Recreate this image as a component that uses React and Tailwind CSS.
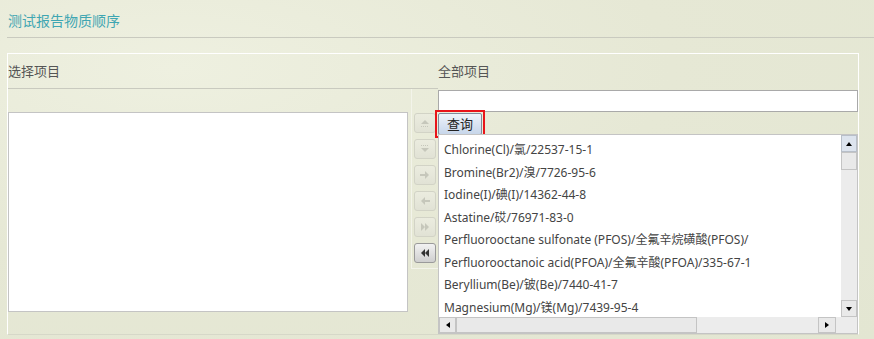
import React from 'react';

const items = [
  'Chlorine(Cl)/氯/22537-15-1',
  'Bromine(Br2)/溴/7726-95-6',
  'Iodine(I)/碘(I)/14362-44-8',
  'Astatine/砹/76971-83-0',
  'Perfluorooctane sulfonate (PFOS)/全氟辛烷磺酸(PFOS)/',
  'Perfluorooctanoic acid(PFOA)/全氟辛酸(PFOA)/335-67-1',
  'Beryllium(Be)/铍(Be)/7440-41-7',
  'Magnesium(Mg)/镁(Mg)/7439-95-4',
];

const cjk = "font-['Noto_Sans_CJK_SC',sans-serif]";
const latin = "font-['Noto_Sans','Noto_Sans_CJK_SC',sans-serif]";

function Tri({ dir, color = '#000' }) {
  const pts = {
    up: '1,6 4,2 7,6',
    down: '1,2 4,6 7,2',
    left: '6,1 2,4 6,7',
    right: '2,1 6,4 2,7',
  }[dir];
  return (
    <svg width="8" height="8" viewBox="0 0 8 8">
      <polygon points={pts} fill={color} />
    </svg>
  );
}

function MoveButton({ icon, enabled }) {
  return (
    <div
      className={
        'w-[22px] h-[20px] rounded-[3px] border flex items-center justify-center ' +
        (enabled
          ? 'border-[#9a9a9a] bg-gradient-to-b from-[#f2f2f2] to-[#cfcfcf]'
          : 'border-[#d2d3c6] bg-gradient-to-b from-[#ebecdf] to-[#e1e2d5]')
      }
    >
      {icon}
    </div>
  );
}

const dis = '#c6c7bb';

export default function App() {
  return (
    <div className="w-[874px] h-[339px] overflow-hidden bg-[#e7e9d7] bg-[radial-gradient(ellipse_at_20%_20%,#eef0e0_0%,#e6e8d5_50%,#e3e6d2_100%)]">
      <div className={`${cjk} pl-2 pt-[10px] h-[37px] text-[14px] text-[#3fa6b2] leading-[20px]`}>
        测试报告物质顺序
      </div>
      <div className="ml-[7px] border-t border-[#c9cabf]" />

      <div className="mt-[15px] ml-[7px] w-[852px] h-[282px] border border-white border-b-[#d6d8c8] flex">
        {/* left column */}
        <div className="w-[400px] flex flex-col">
          <div className={`${cjk} h-[35px] border-b border-[#c9cabf] text-[13px] text-[#555] flex items-center`}>
            选择项目
          </div>
          <div className="mt-[23px] w-[400px] h-[200px] bg-white border border-[#c4c4c4]" />
        </div>

        {/* buttons column */}
        <div className="w-[30px] flex flex-col">
          <div className="h-[35px] border-b border-[#c9cabf]" />
          <div className="ml-[3px] h-[180px] border-l border-b border-[#f3f4ea] flex flex-col items-start pl-[2px] pt-[24px] gap-[6px]">
            <MoveButton icon={<svg width="12" height="10" viewBox="0 0 12 10"><polygon points="2,6 6,2 10,6" fill={dis} /><line x1="2" y1="8.5" x2="10" y2="8.5" stroke={dis} strokeDasharray="1 1" /></svg>} />
            <MoveButton icon={<svg width="12" height="10" viewBox="0 0 12 10"><line x1="2" y1="1.5" x2="10" y2="1.5" stroke={dis} strokeDasharray="1 1" /><polygon points="2,4 6,8 10,4" fill={dis} /></svg>} />
            <MoveButton icon={<svg width="12" height="10" viewBox="0 0 12 10"><rect x="1" y="4" width="6" height="2" fill={dis} /><polygon points="6,1 10,5 6,9" fill={dis} /></svg>} />
            <MoveButton icon={<svg width="12" height="10" viewBox="0 0 12 10"><rect x="5" y="4" width="6" height="2" fill={dis} /><polygon points="6,1 2,5 6,9" fill={dis} /></svg>} />
            <MoveButton icon={<svg width="12" height="10" viewBox="0 0 12 10"><polygon points="2,1 6,5 2,9" fill={dis} /><polygon points="6,1 10,5 6,9" fill={dis} /></svg>} />
            <MoveButton enabled icon={<svg width="12" height="10" viewBox="0 0 12 10"><polygon points="6,1 2,5 6,9" fill="#333" /><polygon points="10,1 6,5 10,9" fill="#333" /></svg>} />
          </div>
        </div>

        {/* right column */}
        <div className="flex-1 flex flex-col">
          <div className={`${cjk} h-[35px] text-[13px] text-[#555] flex items-center`}>全部项目</div>
          <div className="mt-[2px] h-[23px] bg-white border border-[#a9a9a9]" />
          <div className="mt-[-2px] ml-[-3px] w-[50px] h-[29px] border-2 border-[#e8141a] p-px">
            <div className={`${cjk} h-full border border-[#7f8a9c] rounded-[2px] bg-gradient-to-b from-[#eef3fa] to-[#c7d6ea] text-[13px] text-[#222] flex items-center justify-center leading-none`}>
              查询
            </div>
          </div>
          <div className="mt-[-4px] h-[200px] bg-white border border-[#c4c4c4] flex flex-col">
            <div className="flex flex-1 min-h-0">
              <div className={`${latin} flex-1 pt-[4px] pl-[5px] text-[12px] text-[#444] overflow-hidden whitespace-nowrap`}>
                {items.map((t) => (
                  <div key={t} className="h-[22.5px] leading-[22.5px]">{t}</div>
                ))}
              </div>
              <div className="w-[16px] bg-[#ececec] flex flex-col">
                <div className="h-[17px] border border-[#b8bfc9] bg-[#dde4ee] flex items-center justify-center"><Tri dir="up" /></div>
                <div className="h-[18px] border border-[#c4c4c4] bg-[#e9e9e9]" />
                <div className="flex-1" />
                <div className="h-[17px] border border-[#c4c4c4] bg-[#e9e9e9] flex items-center justify-center"><Tri dir="down" /></div>
              </div>
            </div>
            <div className="h-[16px] flex bg-[#ececec]">
              <div className="w-[17px] border border-[#c4c4c4] bg-[#e9e9e9] flex items-center justify-center"><Tri dir="left" /></div>
              <div className="w-[241px] border border-[#c4c4c4] bg-[#e9e9e9]" />
              <div className="flex-1" />
              <div className="w-[18px] border border-[#c4c4c4] bg-[#e9e9e9] flex items-center justify-center"><Tri dir="right" /></div>
              <div className="w-[21px]" />
            </div>
          </div>
        </div>
      </div>
    </div>
  );
}
